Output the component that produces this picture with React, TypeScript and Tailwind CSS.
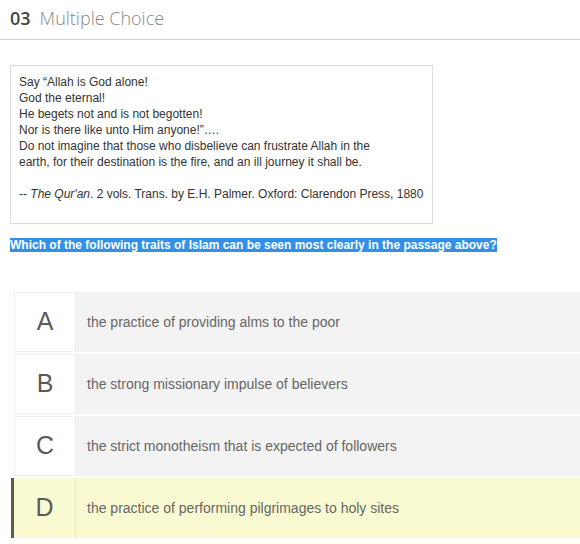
import React from 'react';

type Choice = { letter: string; text: string; selected?: boolean };

const choices: Choice[] = [
	{ letter: 'A', text: 'the practice of providing alms to the poor' },
	{ letter: 'B', text: 'the strong missionary impulse of believers' },
	{ letter: 'C', text: 'the strict monotheism that is expected of followers' },
	{ letter: 'D', text: 'the practice of performing pilgrimages to holy sites', selected: true },
];

const ChoiceRow = ({ choice }: { choice: Choice }) => {
	const sel = choice.selected;
	return (
		<div
			className={
				'flex h-[60px] border-l-[3px] ' +
				(sel ? 'border-l-[#5c5c52] bg-[#fafad2]' : 'border-l-transparent')
			}
		>
			<div
				className={
					'w-[62px] flex items-center justify-center text-[25px] text-[#5a5a5a] ' +
					(sel ? 'border-r border-r-[#ebebc4]' : 'bg-white border border-[#efefef]')
				}
			>
				{choice.letter}
			</div>
			<div
				className={
					'flex-1 flex items-center pl-[11px] text-[14px] text-[#666] ' +
					(sel ? '' : 'bg-[#f3f3f3]')
				}
			>
				{choice.text}
			</div>
		</div>
	);
};

const App = () => {
	return (
		<div className="w-full bg-white font-['Liberation_Sans',Arial,sans-serif]">
			{/* header */}
			<div className="h-[40px] border-b border-[#cfcfcf] flex items-center px-[10px] pb-[3px] font-['Open_Sans',sans-serif] text-[18px]">
				<span className="font-semibold text-[#444]">03</span>
				<span className="ml-[9px] font-light text-[#888]">Multiple Choice</span>
			</div>

			{/* passage */}
			<div className="mt-[25px] ml-[10px] w-[423px] border border-[#dcdcdc] px-[8px] pt-[8px] pb-[21px] text-[12px] leading-[16px] text-[#333]">
				<p>Say “Allah is God alone!</p>
				<p>God the eternal!</p>
				<p>He begets not and is not begotten!</p>
				<p>Nor is there like unto Him anyone!”….</p>
				<p>
					Do not imagine that those who disbelieve can frustrate Allah in the
					<br />
					earth, for their destination is the fire, and an ill journey it shall be.
				</p>
				<p className="mt-[16px]">
					-- <i>The Qur'an</i>. 2 vols. Trans. by E.H. Palmer. Oxford: Clarendon Press, 1880
				</p>
			</div>

			{/* question */}
			<div className="mt-[14px] ml-[10px] text-[12px] leading-[15px] font-bold text-white">
				<span className="bg-[#3390ea]">
					Which of the following traits of Islam can be seen most clearly in the passage above?
				</span>
			</div>

			{/* choices */}
			<div className="mt-[39px] ml-[11px] flex flex-col gap-[2px]">
				{choices.map((c) => (
					<ChoiceRow key={c.letter} choice={c} />
				))}
			</div>
		</div>
	);
};

export default App;
